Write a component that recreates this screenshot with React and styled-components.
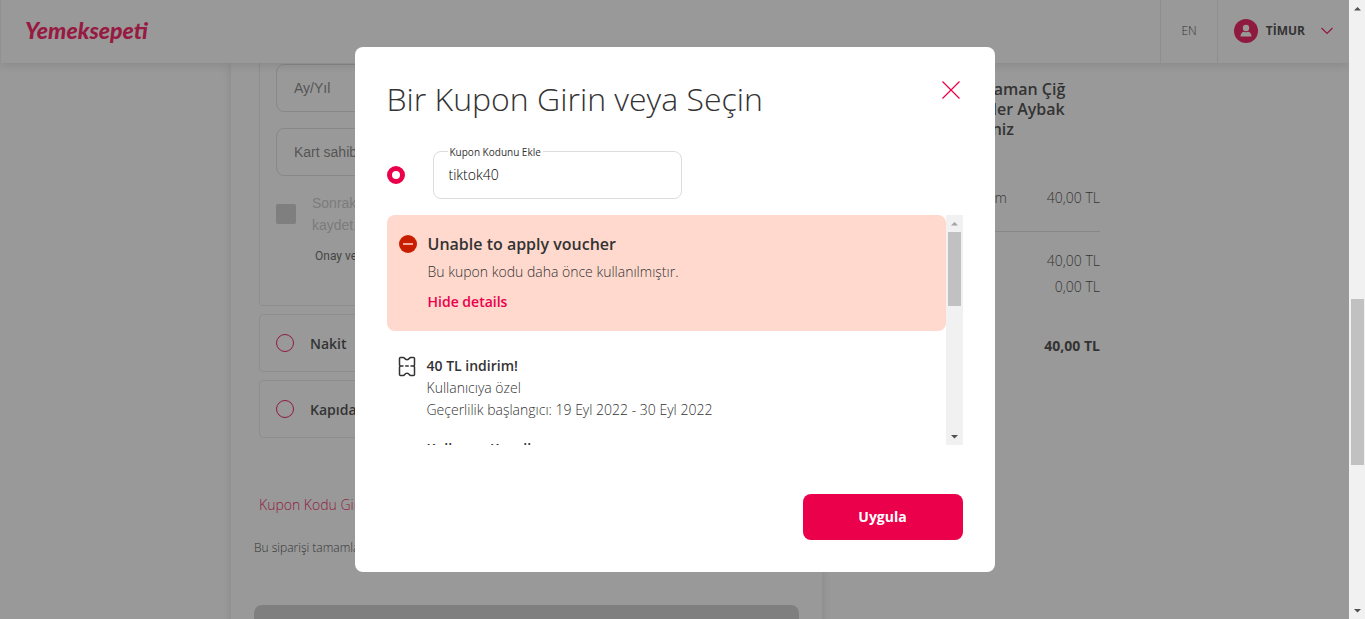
import React from 'react'
import styled, { createGlobalStyle } from 'styled-components'

function App() {
    return (
        <>
            <GlobalStyle />
            <Browser>
                <Page>
                    <Header />
                    <Content>
                        <PaymentSection />
                        <OrderSummary />
                    </Content>
                    <Overlay>
                        <VoucherModal />
                    </Overlay>
                </Page>
                <Scrollbar offset={48.2} size={28.4} width={16} />
            </Browser>
        </>
    )
}

function Header() {
    return (
        <Nav>
            <Logo href="#">Yemeksepeti</Logo>
            <NavItem type="button" $light>EN</NavItem>
            <NavItem type="button">
                <svg width="24" height="24" viewBox="0 0 24 24">
                    <circle cx="12" cy="12" r="12" fill="#ea004b" />
                    <circle cx="12" cy="9" r="3.2" fill="#fff" />
                    <path d="M6.5 17.5c0-3 1.800-4.700 3.700-4.700.6.4 1.100.5 1.800.5s1.200-.1 1.800-.5c1.900 0 3.700 1.700 3.700 4.700z" fill="#fff" />
                </svg>
                <span>TİMUR</span>
                <svg width="12" height="8" viewBox="0 0 12 8" fill="none" stroke="#ea004b" strokeWidth="1.200">
                    <path d="M.5 1 6 6.500 11.500 1" />
                </svg>
            </NavItem>
        </Nav>
    )
}

function PaymentSection() {
    return (
        <Card>
            <CardForm>
                <input aria-label="Ay/Yıl" placeholder="Ay/Yıl" />
                <input aria-label="Kart sahibi" placeholder="Kart sahibinin adı" />
                <SaveCard>
                    <input type="checkbox" disabled />
                    <span>Sonraki siparişlerim<br />kaydet.</span>
                </SaveCard>
                <Consent>Onay ver</Consent>
            </CardForm>
            <Method>
                <input type="radio" name="payment" />
                Nakit
            </Method>
            <Method>
                <input type="radio" name="payment" />
                Kapıda Kart
            </Method>
            <CouponLink href="#">Kupon Kodu Gir</CouponLink>
            <Note>Bu siparişi tamamlayarak</Note>
            <OrderButton type="button" disabled aria-label="Sipariş ver" />
        </Card>
    )
}

function OrderSummary() {
    return (
        <Summary>
            <h3>Oses Çiğ Köfte – Adıyaman Çiğ<br />Köfte - Merkez Şekerler Aybak<br />Mah. Şb.'den siparişiniz</h3>
            <Line $item>
                <span>Dürüm</span>
                <span>40,00 TL</span>
            </Line>
            <Totals>
                <Line>
                    <span>Ara toplam</span>
                    <span>40,00 TL</span>
                </Line>
                <Line>
                    <span>Teslimat</span>
                    <span>0,00 TL</span>
                </Line>
                <Line $total>
                    <span>Toplam</span>
                    <span>40,00 TL</span>
                </Line>
            </Totals>
        </Summary>
    )
}

function VoucherModal() {
    return (
        <Modal role="dialog" aria-labelledby="voucher-title">
            <ModalHeader>
                <h1 id="voucher-title">Bir Kupon Girin veya Seçin</h1>
                <CloseButton type="button" aria-label="Kapat">
                    <svg width="20" height="20" viewBox="0 0 20 20" stroke="#ea004b" strokeWidth="1.200">
                        <path d="M1.500 1.500 18.500 18.500M18.500 1.500 1.500 18.500" />
                    </svg>
                </CloseButton>
            </ModalHeader>
            <CodeRow>
                <VoucherRadio type="radio" name="voucher" aria-label="Kupon kodu" defaultChecked />
                <Field>
                    <label htmlFor="code">Kupon Kodunu Ekle</label>
                    <input id="code" defaultValue="tiktok40" />
                </Field>
            </CodeRow>
            <Scroller>
                <VoucherList>
                    <Alert>
                        <svg width="18" height="18" viewBox="0 0 18 18">
                            <circle cx="9" cy="9" r="9" fill="#c81e00" />
                            <path d="M4 9h10" stroke="#ffd9ce" strokeWidth="1.500" />
                        </svg>
                        <div>
                            <h2>Unable to apply voucher</h2>
                            <p>Bu kupon kodu daha önce kullanılmıştır.</p>
                            <button type="button">Hide details</button>
                        </div>
                    </Alert>
                    <Voucher>
                        <svg width="18" height="22" viewBox="0 0 18 22" fill="none" stroke="#333" strokeWidth="1.500" strokeLinejoin="round">
                            <path d="M2.500 1.500h2.800q.8 0 1.200.8 1 1.400 2.500 1.400t2.500-1.400q.4-.8 1.200-.8h2.800q1 0 1 1v6.200l-.4 1.300.4 1.300v7.200q0 1-1 1h-2.800q-.8 0-1.200-.8-1-1.400-2.500-1.400t-2.500 1.400q-.4.8-1.200.8H2.500q-1 0-1-1v-7.200l.4-1.300-.4-1.300V2.500q0-1 1-1z" />
                            <path d="M2 10h3.500M7.200 10h3.600M12.500 10H16" />
                        </svg>
                        <div>
                            <h4>40 TL indirim!</h4>
                            <p>Kullanıcıya özel</p>
                            <p>Geçerlilik başlangıcı: 19 Eyl 2022 - 30 Eyl 2022</p>
                            <h5>Kullanım Koşulları</h5>
                        </div>
                    </Voucher>
                </VoucherList>
                <Scrollbar offset={0} size={38} width={17} atTop />
            </Scroller>
            <ApplyButton type="button">Uygula</ApplyButton>
        </Modal>
    )
}

function Scrollbar({ offset, size, width, atTop }) {
    return (
        <Track $width={width} aria-hidden="true">
            <svg width="17" height="17" fill={atTop ? '#a3a3a3' : '#505050'}>
                <path d="M5 10.500 8.500 7 12 10.500z" />
            </svg>
            <Rail>
                <Thumb style={{ top: `${offset}%`, height: `${size}%` }} />
            </Rail>
            <svg width="17" height="17" fill="#505050">
                <path d="M5 7h7L8.500 10.500z" />
            </svg>
        </Track>
    )
}

const GlobalStyle = createGlobalStyle`
  * {
    box-sizing: border-box;
    margin: 0;
  }
  body {
    background: #fff;
    color: #333;
    font-family: 'Open Sans', 'Noto Sans', sans-serif;
    font-size: 14px;
    font-weight: 300;
  }
  button, input {
    font: inherit;
    color: inherit;
  }
  button {
    border: none;
    padding: 0;
    background: none;
    cursor: pointer;
  }
  svg {
    display: block;
    flex: none;
  }
`;

const Browser = styled.div`
  display: flex;
  height: 100vh;
  overflow: hidden;
`;

const Page = styled.div`
  position: relative;
  flex: 1;
  overflow: hidden;
`;

const Nav = styled.header`
  position: relative;
  display: flex;
  height: 63px;
  border-left: 1px solid #eee;
  background: #fff;
  box-shadow: 0 2px 10px rgba(0, 0, 0, 0.15);
`;

const Logo = styled.a`
  margin-right: auto;
  padding-left: 24px;
  color: #fa0050;
  font-family: Lato, sans-serif;
  font-size: 23px;
  font-style: italic;
  font-weight: 900;
  line-height: 60px;
  text-decoration: none;
`;

const NavItem = styled.button`
  display: flex;
  align-items: center;
  padding: 0 ${props => props.$light ? '20px' : '16px'} 2px;
  border-left: 1px solid #e8e8e8;
  font-size: 12px;
  font-weight: ${props => props.$light ? 300 : 700};
  span {
    margin: 0 16px 0 8px;
  }
`;

const Content = styled.main`
  display: grid;
  grid-template-columns: 2fr 1fr;
  max-width: 887px;
  margin: 0 auto;
`;

const Card = styled.section`
  padding: 0 23px;
  box-shadow: 0 0 10px rgba(0, 0, 0, 0.15);
`;

const CardForm = styled.div`
  display: flex;
  flex-direction: column;
  gap: 16px;
  margin: 0 5px 8px;
  padding: 1px 16px 41px;
  border: 1px solid #e8e8e8;
  border-top: none;
  border-radius: 0 0 4px 4px;
  font-family: 'Liberation Sans', Arial, sans-serif;
  font-weight: 400;
  > input {
    height: 48px;
    padding: 0 17px;
    border: 1px solid #ddd;
    border-radius: 8px;
    background: none;
  }
  input::placeholder {
    color: #777;
  }
`;

const SaveCard = styled.label`
  display: flex;
  gap: 16px;
  color: #c4c4c4;
  line-height: 22px;
  input {
    appearance: none;
    width: 20px;
    height: 20px;
    margin-top: 12px;
    border-radius: 2px;
    background: #cbcbcb;
  }
`;

const Consent = styled.p`
  margin-top: -4px;
  padding-left: 39px;
  color: #555;
  font-family: Roboto, sans-serif;
  font-size: 12px;
  line-height: 16px;
`;

const Method = styled.label`
  display: flex;
  align-items: center;
  gap: 16px;
  height: 58px;
  margin: 0 5px 8px;
  padding: 0 16px;
  border: 1px solid #e8e8e8;
  border-radius: 4px;
  font-weight: 600;
  input {
    appearance: none;
    width: 18px;
    height: 18px;
    border: 1px solid #ea004b;
    border-radius: 50%;
  }
`;

const CouponLink = styled.a`
  display: block;
  margin: 57px 5px 0;
  color: #ea004b;
  line-height: 20px;
  text-decoration: none;
`;

const Note = styled.p`
  margin: 24px 0 48px;
  font-size: 12px;
  line-height: 18px;
`;

const OrderButton = styled.button`
  display: block;
  width: 100%;
  height: 48px;
  border-radius: 8px;
  background: #cbcbcb;
`;

const Summary = styled.aside`
  min-width: 0;
  padding: 16px 18px 0 11px;
  h3 {
    margin-bottom: 46px;
    font-size: 16px;
    font-weight: 600;
    line-height: 20px;
    white-space: nowrap;
  }
`;

const Line = styled.div`
  display: flex;
  justify-content: ${props => props.$item ? 'flex-end' : 'space-between'};
  gap: 40px;
  padding: ${props => props.$total ? '33px 0 0 20px' : '0 0 0 20px'};
  font-weight: ${props => props.$total ? 700 : 300};
  line-height: 26px;
`;

const Totals = styled.div`
  margin-top: 20px;
  padding-top: 16px;
  border-top: 1px solid #ddd;
`;

const Overlay = styled.div`
  position: absolute;
  inset: 0;
  display: flex;
  align-items: center;
  justify-content: center;
  background: rgba(51, 51, 51, 0.5);
`;

const Modal = styled.div`
  width: 640px;
  padding: 32px;
  border-radius: 8px;
  background: #fff;
`;

const ModalHeader = styled.div`
  display: flex;
  align-items: flex-start;
  justify-content: space-between;
  margin-bottom: 32px;
  h1 {
    font-size: 32px;
    font-weight: 300;
    line-height: 40px;
  }
`;

const CloseButton = styled.button`
  padding: 1px 2px;
`;

const CodeRow = styled.div`
  display: flex;
  align-items: center;
  gap: 28px;
  margin-bottom: 16px;
`;

const VoucherRadio = styled.input`
  appearance: none;
  width: 18px;
  height: 18px;
  border: 5px solid #ea004b;
  border-radius: 50%;
`;

const Field = styled.div`
  position: relative;
  width: 249px;
  label {
    position: absolute;
    top: -6px;
    left: 15px;
    padding: 0 2px;
    background: #fff;
    font-size: 10px;
    font-weight: 400;
    line-height: 14px;
  }
  input {
    display: block;
    width: 100%;
    height: 48px;
    padding: 0 15px 2px;
    border: 1px solid #dcdcdc;
    border-radius: 8px;
    color: #000;
  }
`;

const Scroller = styled.div`
  display: flex;
  height: 230px;
  margin-bottom: 49px;
`;

const VoucherList = styled.div`
  flex: 1;
  overflow: hidden;
`;

const Alert = styled.div`
  display: flex;
  gap: 11px;
  padding: 17px 12px 19px;
  border-radius: 8px;
  background: #ffd9ce;
  svg {
    margin-top: 3px;
  }
  h2 {
    font-size: 16px;
    font-weight: 600;
    line-height: 24px;
  }
  p {
    margin: 6px 0 10px;
    line-height: 20px;
  }
  button {
    display: block;
    color: #ea004b;
    font-weight: 600;
    line-height: 20px;
  }
`;

const Voucher = styled.div`
  display: flex;
  gap: 11px;
  padding: 24px 11px;
  line-height: 22px;
  svg {
    margin-top: 1px;
  }
  h4, h5 {
    font-size: 14px;
    font-weight: 600;
  }
  h5 {
    margin-top: 17px;
  }
`;

const ApplyButton = styled.button`
  display: block;
  width: 160px;
  height: 46px;
  margin-left: auto;
  padding-bottom: 2px;
  border-radius: 8px;
  background: #ea004b;
  color: #fff;
  font-weight: 700;
`;

const Track = styled.div`
  display: flex;
  flex: none;
  flex-direction: column;
  width: ${props => props.$width}px;
  background: #f1f1f1;
`;

const Rail = styled.div`
  position: relative;
  flex: 1;
`;

const Thumb = styled.div`
  position: absolute;
  left: 2px;
  width: 13px;
  background: #c1c1c1;
`;

export default App
